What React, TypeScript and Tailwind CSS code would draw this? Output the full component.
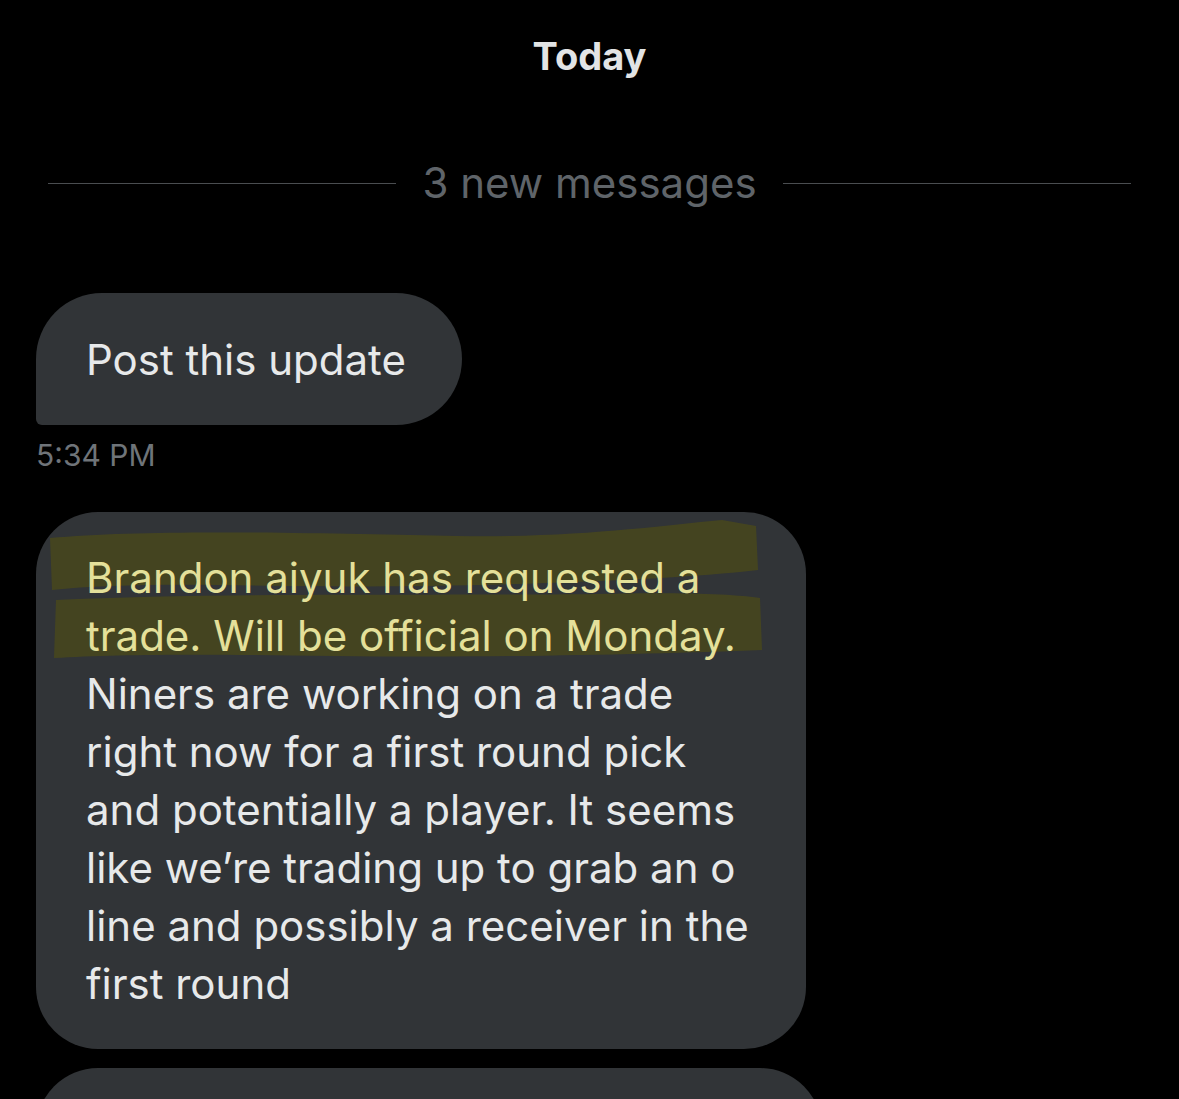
import React from "react";

const firstLines = [
  "Brandon aiyuk has requested a",
  "trade. Will be official on Monday.",
];

const restLines = [
  "Niners are working on a trade",
  "right now for a first round pick",
  "and potentially a player. It seems",
  "like we\u2019re trading up to grab an o",
  "line and possibly a receiver in the",
  "first round",
];

export default function App() {
  return (
    <div
      className="w-[1179px] h-[1099px] overflow-hidden bg-black text-[#e7e9ea]"
      style={{ fontFamily: "Inter, 'Noto Sans', sans-serif" }}
    >
      {/* Day header */}
      <div className="pt-[33px] text-center text-[38px] font-bold leading-[46px] text-[#e2e4e5]">
        Today
      </div>

      {/* New messages divider */}
      <div className="mt-[79px] flex items-center px-[48px]">
        <div className="h-px flex-1 bg-[#4a4d50]"></div>
        <span className="px-[26px] text-[42px] leading-[50px] text-[#5f6469]">
          3 new messages
        </span>
        <div className="h-px flex-1 bg-[#4a4d50]"></div>
      </div>

      <div className="px-[36px] pt-[85px]">
        {/* First message */}
        <div className="flex h-[132px] w-[426px] items-center rounded-[66px] rounded-bl-[6px] bg-[#313437] pl-[50px] text-[42px]">
          Post this update
        </div>
        <div className="mt-[12px] text-[30px] leading-[36px] text-[#6f7479]">
          5:34 PM
        </div>

        {/* Second message */}
        <div className="relative mt-[39px] w-[770px] overflow-hidden rounded-[62px] bg-[#313437] pb-[36px] pl-[50px] pt-[37px] text-[42px] leading-[58px]">
          {/* marker highlight */}
          <svg
            className="absolute left-0 top-0"
            width="770"
            height="170"
            viewBox="0 0 770 170"
          >
            <path
              d="M14 26 C120 16 300 22 420 24 C540 26 620 14 686 8 L720 14 L722 58 C620 70 400 76 250 74 C150 72 70 72 16 78 Z"
              fill="#46461f"
              opacity="0.95"
            />
            <path
              d="M20 88 C180 80 420 84 560 82 C640 80 700 82 724 86 L726 138 C620 142 460 146 300 144 C180 142 80 142 18 146 Z"
              fill="#46461f"
              opacity="0.95"
            />
          </svg>
          <div className="relative">
            {firstLines.map((l) => (
              <div key={l} className="whitespace-nowrap text-[#e4e09a]">
                {l}
              </div>
            ))}
            {restLines.map((l) => (
              <div key={l} className="whitespace-nowrap">
                {l}
              </div>
            ))}
          </div>
        </div>

        {/* Third message (cut off) */}
        <div className="mt-[19px] h-[80px] w-[786px] rounded-t-[62px] bg-[#313437]"></div>
      </div>
    </div>
  );
}
